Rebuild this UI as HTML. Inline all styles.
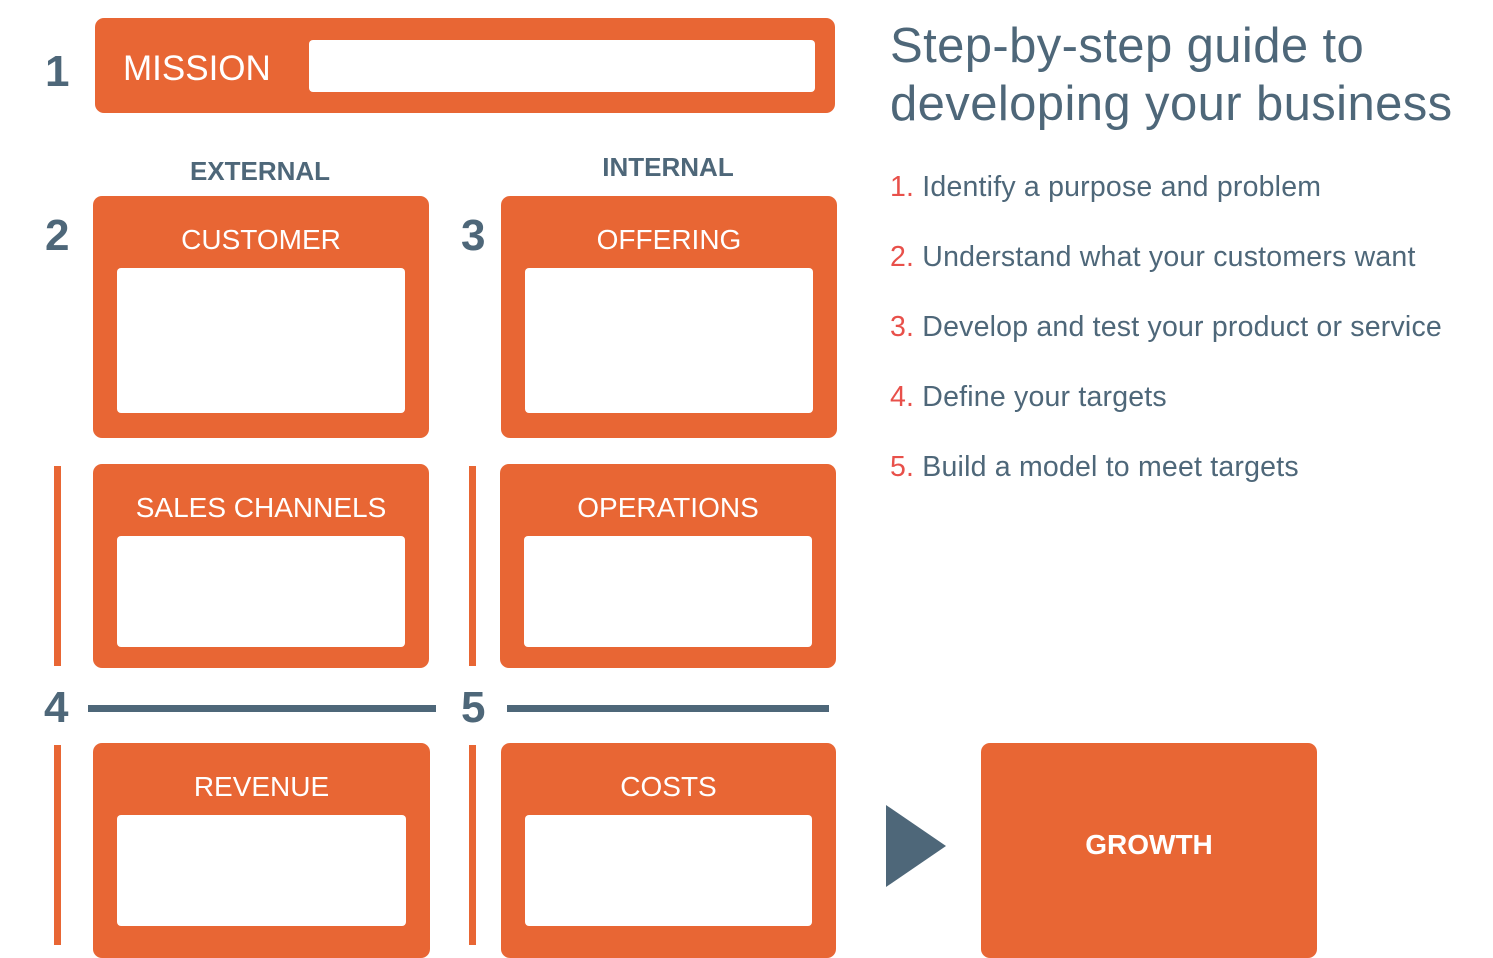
<!DOCTYPE html>
<html><head><meta charset="utf-8"><style>
body{margin:0;width:1493px;height:948px;background:#fff;position:relative;overflow:hidden;font-family:"Liberation Sans",sans-serif}
.a{position:absolute}
.o{position:absolute;background:#E86634;border-radius:9px}
.w{position:absolute;background:#fff;border-radius:4px}
.t{position:absolute;color:#fff;font-size:28px;text-align:center;left:0;right:0;line-height:34px}
.n{position:absolute;color:#4E6779;font-weight:bold;font-size:44px;line-height:44px}
.v{position:absolute;background:#E86634;width:7px}
.h{position:absolute;background:#4E6779;height:7px}
.lab{position:absolute;color:#4E6779;font-weight:bold;font-size:26px;line-height:30px;text-align:center;width:300px}
.li{position:absolute;left:890px;font-size:28.5px;color:#4E6779;line-height:32px;white-space:nowrap;letter-spacing:0.2px}
.li b{font-weight:normal;color:#E8504A}
</style></head><body>
<div class="n" style="left:45px;top:50px">1</div>
<div class="o" style="left:95px;top:18px;width:740px;height:95px">
  <div class="a" style="left:28px;top:31px;color:#fff;font-size:35px;line-height:40px">MISSION</div>
  <div class="w" style="left:214px;top:22px;width:506px;height:52px"></div>
</div>
<div class="lab" style="left:110px;top:156px">EXTERNAL</div>
<div class="lab" style="left:518px;top:152px">INTERNAL</div>
<div class="n" style="left:45px;top:214px">2</div>
<div class="n" style="left:461px;top:214px">3</div>
<div class="o" style="left:93px;top:196px;width:336px;height:242px"><div class="t" style="top:27px">CUSTOMER</div><div class="w" style="left:24px;top:72px;width:288px;height:145px"></div></div>
<div class="o" style="left:501px;top:196px;width:336px;height:242px"><div class="t" style="top:27px">OFFERING</div><div class="w" style="left:24px;top:72px;width:288px;height:145px"></div></div>
<div class="v" style="left:54px;top:466px;height:200px"></div>
<div class="v" style="left:469px;top:466px;height:200px"></div>
<div class="o" style="left:93px;top:464px;width:336px;height:204px"><div class="t" style="top:27px">SALES CHANNELS</div><div class="w" style="left:24px;top:72px;width:288px;height:111px"></div></div>
<div class="o" style="left:500px;top:464px;width:336px;height:204px"><div class="t" style="top:27px">OPERATIONS</div><div class="w" style="left:24px;top:72px;width:288px;height:111px"></div></div>
<div class="n" style="left:44px;top:686px">4</div>
<div class="n" style="left:461px;top:686px">5</div>
<div class="h" style="left:88px;top:705px;width:348px"></div>
<div class="h" style="left:507px;top:705px;width:322px"></div>
<div class="v" style="left:54px;top:745px;height:200px"></div>
<div class="v" style="left:469px;top:745px;height:200px"></div>
<div class="o" style="left:93px;top:743px;width:337px;height:215px"><div class="t" style="top:27px">REVENUE</div><div class="w" style="left:24px;top:72px;width:289px;height:111px"></div></div>
<div class="o" style="left:501px;top:743px;width:335px;height:215px"><div class="t" style="top:27px">COSTS</div><div class="w" style="left:24px;top:72px;width:287px;height:111px"></div></div>
<svg class="a" style="left:886px;top:805px" width="60" height="82"><polygon points="0,0 60,41 0,82" fill="#4E6779"/></svg>
<div class="o" style="left:981px;top:743px;width:336px;height:215px"><div class="t" style="top:85px;font-weight:bold">GROWTH</div></div>
<div class="a" style="left:890px;top:17px;color:#4E6779;font-size:49px;line-height:58px;white-space:nowrap;letter-spacing:0.4px">Step-by-step guide to<br>developing your business</div>
<div class="li" style="top:171px"><b>1.</b> Identify a purpose and problem</div>
<div class="li" style="top:241px"><b>2.</b> Understand what your customers want</div>
<div class="li" style="top:311px"><b>3.</b> Develop and test your product or service</div>
<div class="li" style="top:381px"><b>4.</b> Define your targets</div>
<div class="li" style="top:451px"><b>5.</b> Build a model to meet targets</div>
</body></html>
